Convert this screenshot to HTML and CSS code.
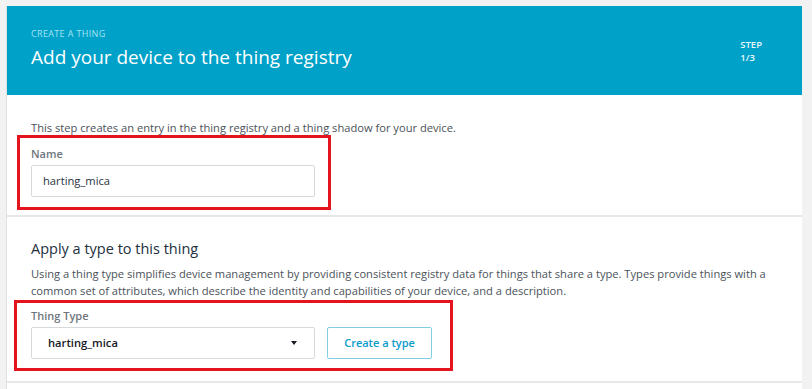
FILE: index.html
```html
<!DOCTYPE html>
<html>
<head>
<meta charset="utf-8">
<link rel="stylesheet" href="styles.css">
</head>
<body>
<div class="page">
  <div class="card">
    <div class="header">
      <div class="header-text">
        <div class="eyebrow">CREATE A THING</div>
        <h1 class="title">Add your device to the thing registry</h1>
      </div>
      <div class="step">STEP<br>1/3</div>
    </div>
    <div class="section s1">
      <p class="desc">This step creates an entry in the thing registry and a thing shadow for your device.</p>
      <div class="label">Name</div>
      <div class="input">harting_mica</div>
      <div class="highlight h1"></div>
    </div>
    <div class="section s2">
      <h2 class="subtitle">Apply a type to this thing</h2>
      <p class="desc">Using a thing type simplifies device management by providing consistent registry data for things that share a type. Types provide things with a common set of attributes, which describe the identity and capabilities of your device, and a description.</p>
      <div class="label">Thing Type</div>
      <div class="row">
        <div class="select"><span>harting_mica</span><span class="caret"></span></div>
        <div class="button">Create a type</div>
      </div>
      <div class="highlight h2"></div>
    </div>
  </div>
</div>
</body>
</html>
```
FILE: styles.css
```css
* { box-sizing: border-box; }
html, body { margin: 0; padding: 0; }
body {
  background: #f2f2f2;
  font-family: "Open Sans", "Noto Sans", sans-serif;
  color: #545b64;
  width: 812px;
  height: 389px;
  overflow: hidden;
}
.page {
  padding: 6px 10px 0 6px;
}
.card {
  background: #fff;
  border-left: 1px solid #e1e1e1;
  min-height: 400px;
}
.header {
  background: #00a1c9;
  height: 89px;
  display: flex;
  justify-content: space-between;
  padding: 0 40px 0 24px;
}
.eyebrow {
  margin-top: 22px;
  font-size: 9px;
  line-height: 12px;
  letter-spacing: 0.35px;
  color: #a6e3f2;
}
.title {
  margin: 5px 0 0;
  font-size: 19px;
  line-height: 24px;
  font-weight: 400;
  color: #fff;
}
.step {
  margin-top: 33px;
  font-size: 9.5px;
  line-height: 12.5px;
  color: #eaf8fc;
  font-weight: 600;
}
.section {
  position: relative;
  padding: 0 24px;
  border-bottom: 2px solid #e8e8e8;
}
.s1 { padding-top: 25px; height: 122px; }
.s2 { padding-top: 22px; height: 166px; }
.desc {
  margin: 0;
  font-size: 11.15px;
  line-height: 16px;
  color: #4b525a;
}
.s2 .desc { margin-top: 6px; line-height: 17px; }
.label {
  margin-top: 10px;
  font-size: 11px;
  line-height: 16px;
  font-weight: 600;
  color: #6f767d;
}
.s2 .label { margin-top: 9px; }
.input, .select {
  width: 284px;
  height: 32px;
  border: 1px solid #d5dbdb;
  border-radius: 2px;
  font-size: 11.2px;
  line-height: 30px;
  color: #16191f;
}
.input {
  margin-top: 3px;
  padding: 0 11px;
  color: #2a3340;
}
.subtitle {
  margin: 0;
  font-size: 14.5px;
  line-height: 20px;
  font-weight: 400;
  color: #232f3e;
}
.row { display: flex; gap: 12px; margin-top: 3px; }
.select {
  display: flex;
  justify-content: space-between;
  align-items: center;
  padding: 0 17px 0 16px;
  font-weight: 600;
}
.caret {
  width: 0; height: 0;
  border-left: 3.5px solid transparent;
  border-right: 3.5px solid transparent;
  border-top: 4px solid #16191f;
}
.button {
  width: 105px;
  height: 32px;
  border: 1px solid #80cfe4;
  border-radius: 2px;
  color: #0a9bcb;
  font-size: 11px;
  font-weight: 600;
  line-height: 30px;
  text-align: center;
}
.highlight {
  position: absolute;
  border: 3px solid #e3141d;
}
.h1 { left: 10px; top: 40px; width: 314px; height: 75px; }
.h2 { left: 7px; top: 83px; width: 439px; height: 71px; }
```
